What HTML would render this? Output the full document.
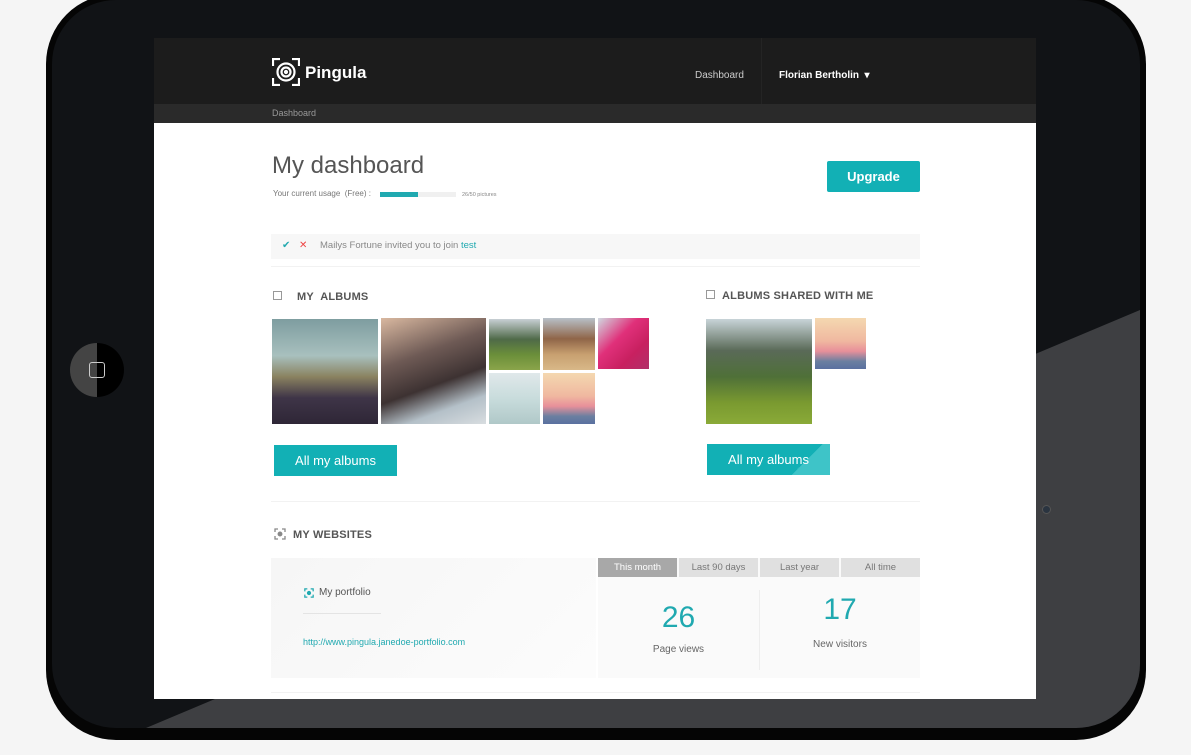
<!DOCTYPE html>
<html><head><meta charset="utf-8"><style>
*{margin:0;padding:0;box-sizing:border-box}
body{width:1191px;height:755px;background:#f5f5f5;position:relative;overflow:hidden;font-family:"Liberation Sans",sans-serif}
.abs{position:absolute}
.body{left:46px;top:-6px;width:1100px;height:746px;border-radius:70px;background:#050505;overflow:hidden}
.inner{left:6px;top:6px;width:1088px;height:728px;border-radius:64px;background:#111316;overflow:hidden}
.screen{left:154px;top:38px;width:882px;height:661px;background:#fff;overflow:hidden}
.hdr{left:0;top:0;width:882px;height:66px;background:#1c1c1c}
.bc{left:0;top:66px;width:882px;height:19px;background:#2a2a2a;color:#999;font-size:9px;line-height:19px;padding-left:118px}
.btn{background:#12b0b5;color:#fff;text-align:center;font-size:13px}
.img{position:absolute}
.sec{font-size:11px;font-weight:bold;color:#555;letter-spacing:.2px}
.ic{position:absolute;width:9px;height:9px;border:1px solid #999;background:#fff}
.tab{position:absolute;top:0;height:19px;background:#e0e0e0;color:#777;font-size:9.5px;text-align:center;line-height:19px}
</style></head><body>
<div class="abs body"><div class="abs inner">
<svg class="abs" style="left:0;top:0" width="1088" height="728"><polygon points="94,728 1088,310 1088,728" fill="#3e3f42"/></svg>
</div></div>
<div class="abs" style="left:70px;top:343px;width:54px;height:54px;border-radius:50%;background:linear-gradient(90deg,#444 50%,#000 50%)"></div>
<div class="abs" style="left:89px;top:362px;width:16px;height:16px;border:1.5px solid #ccc;border-radius:3px"></div>
<div class="abs" style="left:1042px;top:505px;width:9px;height:9px;border-radius:50%;background:#2a3440;border:1px solid #555"></div>
<div class="abs screen">
 <div class="abs hdr">
  <svg class="abs" style="left:118px;top:20px" width="28" height="28" viewBox="0 0 28 28" fill="none" stroke="#fff" stroke-width="2.2"><path d="M1 8V1h7M20 1h7v7M27 20v7h-7M8 27H1v-7"/><circle cx="14" cy="14" r="8.5"/><circle cx="14" cy="14" r="4.5"/><circle cx="14" cy="14" r="1" fill="#fff"/></svg>
  <div class="abs" style="left:151px;top:25px;color:#fff;font-size:17px;font-weight:bold">Pingula</div>
  <div class="abs" style="left:541px;top:32px;color:#ccc;font-size:10px">Dashboard</div>
  <div class="abs" style="left:607px;top:0;width:1px;height:66px;background:#242424"></div>
  <div class="abs" style="left:625px;top:32px;color:#fff;font-size:10px;font-weight:bold">Florian Bertholin &nbsp;▾</div>
 </div>
 <div class="abs bc">Dashboard</div>
 <div class="abs" style="left:118px;top:114px;font-size:24px;color:#555">My dashboard</div>
 <div class="abs" style="left:119px;top:151px;font-size:8px;color:#777">Your current usage &nbsp;(Free) :</div>
 <div class="abs" style="left:226px;top:154px;width:76px;height:5px;background:#f0f0f0"><div style="width:38px;height:5px;background:#20a9b0"></div></div>
 <div class="abs" style="left:308px;top:154px;font-size:5.5px;color:#888">26/50 pictures</div>
 <div class="abs btn" style="left:673px;top:123px;width:93px;height:31px;line-height:31px;border-radius:2px;font-weight:bold">Upgrade</div>
 <div class="abs" style="left:117px;top:196px;width:649px;height:25px;background:#f7f7f7"></div>
 <div class="abs" style="left:128px;top:202px;font-size:10px;color:#25aab0">✔</div>
 <div class="abs" style="left:145px;top:202px;font-size:10px;color:#e44">✕</div>
 <div class="abs" style="left:166px;top:202px;font-size:9.5px;color:#888">Mailys Fortune invited you to join <span style="color:#20a9b0">test</span></div>
 <div class="abs" style="left:117px;top:228px;width:649px;height:1px;background:#f2f2f2"></div>
 <div class="ic" style="left:119px;top:253px"></div>
 <div class="abs sec" style="left:143px;top:253px">MY &nbsp;ALBUMS</div>
 <div class="ic" style="left:552px;top:252px"></div>
 <div class="abs sec" style="left:568px;top:252px">ALBUMS SHARED WITH ME</div>
 <div class="img" style="left:118px;top:281px;width:106px;height:105px;background:linear-gradient(180deg,#7e9da0 0%,#a8c0be 35%,#8a8260 55%,#3f3548 75%,#2e2636 100%)"></div>
 <div class="img" style="left:227px;top:280px;width:105px;height:106px;background:linear-gradient(160deg,#d9b8a0 0%,#6e5a55 35%,#3d3232 60%,#b4c0c8 80%,#d8dde0 100%)"></div>
 <div class="img" style="left:335px;top:281px;width:51px;height:51px;background:linear-gradient(180deg,#c8d0d4 0%,#4f6a48 40%,#6b8f3a 70%,#8aa44a 100%)"></div>
 <div class="img" style="left:389px;top:280px;width:52px;height:52px;background:linear-gradient(180deg,#b8c0c8 0%,#8f6548 40%,#c8a070 70%,#d8b888 100%)"></div>
 <div class="img" style="left:444px;top:280px;width:51px;height:51px;background:linear-gradient(135deg,#d0d8e0 0%,#e0307a 40%,#c82060 70%,#b03068 100%)"></div>
 <div class="img" style="left:335px;top:335px;width:51px;height:51px;background:linear-gradient(180deg,#e0e8ea 0%,#c8dcdc 50%,#b0c8c8 100%)"></div>
 <div class="img" style="left:389px;top:335px;width:52px;height:51px;background:linear-gradient(180deg,#f4d8b0 0%,#f0b8a0 45%,#e8909a 65%,#6a7fa0 85%,#5a70a0 100%)"></div>
 <div class="img" style="left:552px;top:281px;width:106px;height:105px;background:linear-gradient(180deg,#c8d4d8 0%,#5a6a58 30%,#4f7038 55%,#7a9a30 80%,#8aaa38 100%)"></div>
 <div class="img" style="left:661px;top:280px;width:51px;height:51px;background:linear-gradient(180deg,#f4d8b0 0%,#f0b8a0 45%,#e8909a 65%,#6a7fa0 85%,#5a70a0 100%)"></div>
 <div class="abs btn" style="left:120px;top:407px;width:123px;height:31px;line-height:31px">All my albums</div>
 <div class="abs btn" style="left:553px;top:406px;width:123px;height:31px;line-height:31px;background:linear-gradient(135deg,#12b0b5 75%,#3ec4c8 75%)">All my albums</div>
 <div class="abs" style="left:117px;top:463px;width:649px;height:1px;background:#f2f2f2"></div>
 <svg class="abs" style="left:120px;top:490px" width="12" height="12" viewBox="0 0 12 12" fill="none" stroke="#888" stroke-width="1.3"><path d="M1 4V1h3M8 1h3v3M11 8v3H8M4 11H1V8"/><circle cx="6" cy="6" r="1.8" fill="#888"/></svg>
 <div class="abs sec" style="left:139px;top:491px">MY WEBSITES</div>
 <div class="abs" style="left:117px;top:520px;width:325px;height:120px;background:linear-gradient(135deg,#f6f6f6,#fcfcfc)"></div>
 <svg class="abs" style="left:150px;top:550px" width="10" height="10" viewBox="0 0 12 12" fill="none" stroke="#20a9b0" stroke-width="1.5"><path d="M1 4V1h3M8 1h3v3M11 8v3H8M4 11H1V8"/><circle cx="6" cy="6" r="1.8" fill="#20a9b0"/></svg>
 <div class="abs" style="left:165px;top:549px;font-size:10px;color:#555">My portfolio</div>
 <div class="abs" style="left:149px;top:575px;width:78px;height:1px;background:#e4e4e4"></div>
 <div class="abs" style="left:149px;top:599px;font-size:9px;color:#20a9b0">http://www.pingula.janedoe-portfolio.com</div>
 <div class="abs" style="left:444px;top:520px;width:322px;height:120px;background:#fafafa"></div>
 <div class="tab" style="left:444px;width:79px;top:520px;background:#a8a8a8;color:#fff">This month</div>
 <div class="tab" style="left:525px;width:79px;top:520px">Last 90 days</div>
 <div class="tab" style="left:606px;width:79px;top:520px">Last year</div>
 <div class="tab" style="left:687px;width:79px;top:520px">All time</div>
 <div class="abs" style="left:605px;top:552px;width:1px;height:80px;background:#eee"></div>
 <div class="abs" style="left:444px;top:563px;width:161px;text-align:center;font-size:30px;color:#20a9b0">26</div>
 <div class="abs" style="left:444px;top:606px;width:161px;text-align:center;font-size:10px;color:#666">Page views</div>
 <div class="abs" style="left:606px;top:555px;width:160px;text-align:center;font-size:30px;color:#20a9b0">17</div>
 <div class="abs" style="left:606px;top:601px;width:160px;text-align:center;font-size:10px;color:#666">New visitors</div>
 <div class="abs" style="left:117px;top:654px;width:649px;height:1px;background:#f2f2f2"></div>
</div>
</body></html>
